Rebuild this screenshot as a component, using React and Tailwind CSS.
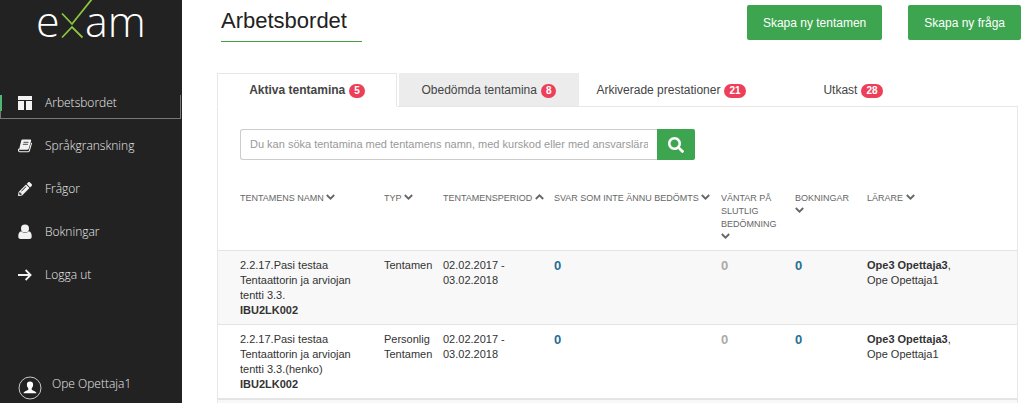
import React, { useState } from 'react';
import { FaPencilAlt, FaSearch } from 'react-icons/fa';

const DashboardIcon = () => (
  <svg viewBox="0 0 14 14" className="h-[14px] w-[14px]" fill="currentColor" aria-hidden="true">
    <path d="M0 0h14v4H0zM0 5h6v9H0zM8 5h6v9H8z" />
  </svg>
);

const BookIcon = () => (
  <svg viewBox="0 0 14 14" className="h-[14px] w-[14px]" aria-hidden="true">
    <path d="M4.4.5h7.6c.9 0 1.400.6 1.100 1.500l-2.300 7.500c-.2.8-.8 1.200-1.600 1.200H1L3.300 1.500c.2-.6.5-1 1.100-1z" fill="currentColor" />
    <path d="M5.500 3.300h5M4.900 5.300h5" stroke="#222222" strokeWidth="0.8" />
    <path d="M1 9.800c-.9 1.400-.4 3 .9 3h8c.7 0 1.200-.3 1.400-1l2.300-7.800" fill="none" stroke="currentColor" strokeWidth="1.100" />
  </svg>
);

const PersonIcon = () => (
  <svg viewBox="0 0 14 16" className="h-4 w-[14px]" fill="currentColor" aria-hidden="true">
    <circle cx="7" cy="4.5" r="4" />
    <path d="M3.4 7.3C1 7.6.3 9.8.3 12.5.3 14.3 1.300 15 2.700 15h8.600c1.400 0 2.400-.7 2.400-2.500 0-2.700-.7-4.900-3.100-5.200C9.600 8.500 8.300 9 7 9s-2.600-.5-3.600-1.700z" />
  </svg>
);

const ArrowIcon = () => (
  <svg viewBox="0 0 14 12" className="h-3 w-[14px]" fill="none" stroke="currentColor" strokeWidth="1.800" aria-hidden="true">
    <path d="M0 6h12.500M7.600 1l5 5-5 5" />
  </svg>
);

const AvatarIcon = () => (
  <svg viewBox="0 0 24 24" className="h-6 w-6" aria-hidden="true">
    <circle cx="12" cy="12" r="11" fill="none" stroke="#c8c8c8" strokeWidth="1" />
    <path d="M12 5.500c2 0 3.200 1.200 3.100 3.200 0 1.500-.6 2.600-1.400 3.500v1.500c.5.900 4.600 1.200 4.800 3.600H5.500c.2-2.400 4.300-2.700 4.800-3.600v-1.500c-.8-.9-1.400-2-1.400-3.500C8.800 6.700 10 5.500 12 5.500z" fill="#ffffff" />
  </svg>
);

const Chevron = ({ up }) => (
  <svg viewBox="0 0 9 6" className="mb-px inline-block h-[6px] w-[9px] align-baseline" fill="none" stroke="currentColor" strokeWidth="1.800" aria-hidden="true">
    <path d={up ? 'M.8 5l3.700-3.700L8.200 5' : 'M.8 1l3.700 3.700L8.200 1'} />
  </svg>
);

const Logo = () => (
  <svg viewBox="0 0 182 44" className="h-11 w-[182px] overflow-visible" role="img" aria-label="exam">
    <g fill="#ffffff" fontSize="43" className="font-['Open_Sans',sans-serif] font-light">
      <text x="36" y="37">e</text>
      <text x="85" y="37">am</text>
    </g>
    <g fill="none" stroke="#8cc63f" strokeWidth="1.800">
      <path d="M62 13.500l10 10.500L92 -1" />
      <path d="M62 37.500l10-10.500 10.500 10.500" />
    </g>
  </svg>
);

const menu = [
  { label: 'Arbetsbordet', icon: <DashboardIcon />, active: true },
  { label: 'Språkgranskning', icon: <BookIcon /> },
  { label: 'Frågor', icon: <FaPencilAlt className="h-[14px] w-[14px]" /> },
  { label: 'Bokningar', icon: <PersonIcon /> },
  { label: 'Logga ut', icon: <ArrowIcon /> },
];

const tabs = [
  { label: 'Aktiva tentamina', count: 5 },
  { label: 'Obedömda tentamina', count: 8 },
  { label: 'Arkiverade prestationer', count: 21 },
  { label: 'Utkast', count: 28 },
];

const columns = [
  { label: 'TENTAMENS NAMN', width: 'w-[166px]' },
  { label: 'TYP', width: 'w-[59px]' },
  { label: 'TENTAMENSPERIOD', width: 'w-[111px]', up: true },
  { label: 'SVAR SOM INTE ÄNNU BEDÖMTS', width: 'w-[167px]' },
  { label: 'VÄNTAR PÅ SLUTLIG BEDÖMNING', width: 'w-[74px]' },
  { label: 'BOKNINGAR', width: 'w-[72px]' },
  { label: 'LÄRARE', width: '' },
];

const exams = [
  { name: '2.2.17.Pasi testaa Tentaattorin ja arviojan tentti 3.3.', code: 'IBU2LK002', type: 'Tentamen' },
  { name: '2.2.17.Pasi testaa Tentaattorin ja arviojan tentti 3.3.(henko)', code: 'IBU2LK002', type: 'Personlig Tentamen' },
];

const Sidebar = () => (
  <aside className="flex w-[182px] shrink-0 flex-col bg-[#222222] font-['Open_Sans',sans-serif] text-xs font-light text-[#ececec]">
    <Logo />
    <nav className="mt-[51px] flex flex-col gap-[19px]">
      {menu.map((item) => (
        <a
          key={item.label}
          href="#"
          className={`relative mr-px flex h-6 items-start border-x border-b pl-[17px] ${
            item.active ? 'border-[#777777]' : 'border-transparent'
          }`}
        >
          {item.active && <span className="absolute -left-px top-0 h-4 w-[2px] bg-[#4fb870]" />}
          <span className="flex h-4 w-[14px] items-center justify-center text-[#f2f2f2]">{item.icon}</span>
          <span className="ml-[13px] leading-4">{item.label}</span>
        </a>
      ))}
    </nav>
    <div className="mt-auto flex items-start gap-[10px] pb-[3px] pl-[18px]">
      <AvatarIcon />
      <span className="leading-4">Ope Opettaja1</span>
    </div>
  </aside>
);

const Tabs = ({ current, onChange }) => (
  <div role="tablist" className="flex gap-[2px]">
    {tabs.map((tab, index) => (
      <button
        key={tab.label}
        type="button"
        role="tab"
        aria-selected={index === current}
        onClick={() => onChange(index)}
        className={`-mb-px flex h-[34px] w-[180px] items-center justify-center gap-1 border text-xs text-[#444444] ${
          index === current
            ? 'relative border-[#e7e7e7] border-b-white bg-white font-bold'
            : index === 1
              ? 'border-[#ececec] bg-[#ececec]'
              : 'border-transparent'
        }`}
      >
        {tab.label}
        <span className="mt-[2px] rounded-full bg-[#ed3f59] px-[5px] text-[10px] font-bold leading-[14px] text-white">
          {tab.count}
        </span>
      </button>
    ))}
  </div>
);

const ExamTable = () => (
  <table className="w-full table-fixed border-collapse text-left text-[11px] leading-[15px] text-[#333333]">
    <thead>
      <tr className="text-[9px] leading-[13px] text-[#666666]">
        {columns.map((col) => (
          <th key={col.label} className={`${col.width} pb-[6px] pr-2 align-top font-normal first:pl-[22px]`}>
            {col.label} <Chevron up={col.up} />
          </th>
        ))}
      </tr>
    </thead>
    <tbody>
      {exams.map((exam) => (
        <tr key={exam.name} className="border-t border-[#e4e4e4] align-top odd:bg-[#f8f8f8]">
          <td className="pb-[6px] pl-[22px] pr-6 pt-[7px]">
            {exam.name}
            <strong className="block">{exam.code}</strong>
          </td>
          <td className="pt-[7px]">{exam.type}</td>
          <td className="pr-10 pt-[7px]">02.02.2017 - 03.02.2018</td>
          <td className="pt-[7px] text-[13px] font-bold leading-[15px]">
            <a href="#" className="text-[#266f96]">0</a>
          </td>
          <td className="pt-[7px] text-[13px] font-bold leading-[15px] text-[#aaaaaa]">0</td>
          <td className="pt-[7px] text-[13px] font-bold leading-[15px]">
            <a href="#" className="text-[#266f96]">0</a>
          </td>
          <td className="pt-[7px]">
            <strong>Ope3 Opettaja3</strong>,
            <span className="block">Ope Opettaja1</span>
          </td>
        </tr>
      ))}
    </tbody>
  </table>
);

const App = () => {
  const [currentTab, setCurrentTab] = useState(0);
  const [search, setSearch] = useState('');

  return (
    <div className="flex min-h-screen bg-white font-['Liberation_Sans',Arial,sans-serif]">
      <Sidebar />
      <main className="flex min-w-0 flex-1 flex-col pl-[35px]">
        <header className="flex items-start justify-between pl-1 pr-[3px] pt-[5px]">
          <h1 className="w-[141px] border-b border-[#43a047] pb-1 text-[22px] leading-8 text-[#222222]">
            Arbetsbordet
          </h1>
          <div className="flex gap-[26px]">
            <button type="button" className="h-[35px] rounded-[2px] bg-[#3da54f] px-4 text-xs text-white">
              Skapa ny tentamen
            </button>
            <button type="button" className="h-[35px] rounded-[2px] bg-[#3da54f] px-4 text-xs text-white">
              Skapa ny fråga
            </button>
          </div>
        </header>

        <section className="mr-[6px] mt-[31px] flex flex-1 flex-col">
          <Tabs current={currentTab} onChange={setCurrentTab} />
          <div className="flex flex-1 flex-col border-x border-t border-[#e7e7e7]">
            <form className="ml-[22px] mt-[22px] flex h-[31px] w-[455px]" onSubmit={(e) => e.preventDefault()}>
              <input
                type="text"
                aria-label="Sök tentamina"
                value={search}
                onChange={(e) => setSearch(e.target.value)}
                placeholder="Du kan söka tentamina med tentamens namn, med kurskod eller med ansvarslärarens namn"
                className="min-w-0 flex-1 rounded-l-[3px] border border-r-0 border-[#cccccc] px-[9px] text-[11px] text-[#444444] placeholder:text-[#999999]"
              />
              <button
                type="submit"
                aria-label="Sök"
                className="flex w-[38px] items-center justify-center rounded-r-[2px] bg-[#3da54f] text-white"
              >
                <FaSearch className="h-4 w-4" />
              </button>
            </form>
            <div className="mt-8">
              <ExamTable />
            </div>
            <div className="min-h-[5px] flex-1 border-t-2 border-[#e4e4e4] bg-[#f8f8f8]" />
          </div>
        </section>
      </main>
    </div>
  );
};

export default App;
